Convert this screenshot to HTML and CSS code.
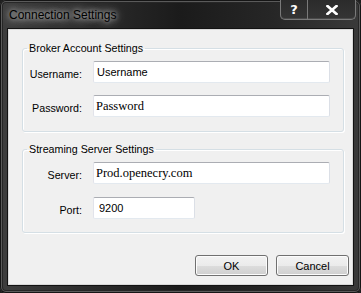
FILE: index.html
```html
<!DOCTYPE html>
<html>
<head>
	<title>Connection Settings</title>
	<link rel="stylesheet" href="styles.css">
</head>
<body>
	<div class="window">
		<div class="titlebar">
			<span class="title">Connection Settings</span>
			<div class="caption-buttons">
				<div class="cap-btn help">?</div>
				<div class="cap-btn close">
					<svg width="12" height="10" viewBox="0 0 12 10">
						<path d="M1.5 1 L10.5 9 M10.5 1 L1.5 9" stroke="#fff" stroke-width="2.6" stroke-linecap="square"/>
					</svg>
				</div>
			</div>
		</div>

		<div class="client">
			<fieldset class="group group-broker">
				<legend>Broker Account Settings</legend>
				<div class="form-grid">
					<label>Username:</label>
					<input class="field" type="text" value="Username">
					<label>Password:</label>
					<input class="field serif" type="text" value="Password">
				</div>
			</fieldset>

			<fieldset class="group group-server">
				<legend>Streaming Server Settings</legend>
				<div class="form-grid">
					<label>Server:</label>
					<input class="field serif" type="text" value="Prod.openecry.com">
					<label>Port:</label>
					<input class="field short" type="text" value="9200">
				</div>
			</fieldset>

			<div class="actions">
				<button class="btn">OK</button>
				<button class="btn">Cancel</button>
			</div>
		</div>
	</div>
</body>
</html>
```

FILE: styles.css
```css
* {
	margin: 0;
	padding: 0;
	box-sizing: border-box;
}
body {
	background-color: #1f1f1f;
	font-family: 'Liberation Sans', Arial, sans-serif;
	font-size: 11px;
	width: 361px;
	height: 293px;
	overflow: hidden;
}
.window {
	width: 361px;
	height: 293px;
	display: flex;
	flex-direction: column;
	border-radius: 6px;
	background: linear-gradient(to right, #3e3e3e 0%, #2c2c2c 25%, #1b1b1b 50%, #262626 75%, #3a3a3a 100%);
	box-shadow: inset 0 0 0 1px #151515, inset 0 0 0 2px #5a5a5a, inset 0 0 0 3px #262626;
}

/* title bar */
.titlebar {
	height: 29px;
	display: flex;
	align-items: flex-start;
	padding-left: 9px;
}
.title {
	margin-top: 7px;
	font-size: 12px;
	line-height: 16px;
	color: #000;
	text-shadow: 0 0 5px rgba(255, 255, 255, 0.7), 0 0 10px rgba(255, 255, 255, 0.6), 0 0 16px rgba(255, 255, 255, 0.45);
}
.caption-buttons {
	margin-left: auto;
	margin-right: 5px;
	display: flex;
	height: 20px;
	border: 1px solid #7a7a7a;
	border-top: none;
	border-radius: 0 0 5px 5px;
	background: linear-gradient(#2b2b2b, #353535);
	box-shadow: inset 0 -1px 0 #4a4a4a;
}
.cap-btn {
	display: flex;
	align-items: center;
	justify-content: center;
	color: #fff;
}
.help {
	width: 27px;
	border-right: 1px solid #7a7a7a;
	font-family: 'DejaVu Sans', sans-serif;
	font-weight: bold;
	font-size: 13px;
	padding-bottom: 1px;
}
.close {
	width: 47px;
}

/* client area */
.client {
	flex: 1;
	margin: 0 8px 8px 8px;
	background-color: #f0f0f0;
	border: 1px solid #d8d8d8;
	box-shadow: 0 0 0 1px #121212;
	padding-top: 11px;
	display: flex;
	flex-direction: column;
}
.group {
	margin: 0 8px 0 13px;
	border: 1px solid #d5dfe5;
	border-radius: 3px;
	box-shadow: 1px 1px 0 #fff, inset 1px 1px 0 #fff;
	padding: 6px 4px 14px 4px;
}
.group-server {
	margin-top: 10px;
	padding-bottom: 13px;
}
.group legend {
	padding: 0 2px;
	font-size: 10.7px;
	line-height: 14px;
	color: #000;
}
.form-grid {
	display: grid;
	grid-template-columns: 55px 237px;
	column-gap: 11px;
	row-gap: 12px;
	align-items: center;
}
.group-server .form-grid {
	row-gap: 13px;
}
.form-grid label {
	text-align: right;
	padding-top: 3px;
	font-size: 10.7px;
	color: #000;
}
.field {
	height: 22px;
	width: 237px;
	border: 1px solid #e2e3ea;
	border-top-color: #abadb3;
	border-right-color: #dbdfe6;
	border-bottom-color: #e3e9ef;
	border-radius: 2px;
	background-color: #fff;
	padding: 0 3px;
	font-family: 'Liberation Sans', Arial, sans-serif;
	font-size: 11px;
	color: #000;
	outline: none;
}
.field.serif {
	font-family: 'Liberation Serif', 'Times New Roman', serif;
	font-size: 12.5px;
	padding-left: 2px;
}
.field.short {
	width: 102px;
	padding-left: 5px;
}

/* buttons */
.actions {
	margin-top: 22px;
	display: flex;
	justify-content: flex-end;
	gap: 8px;
	padding-right: 3px;
}
.btn {
	width: 73px;
	height: 21px;
	border: 1px solid #707070;
	border-radius: 3px;
	background: linear-gradient(#f2f2f2 0%, #ebebeb 50%, #dddddd 51%, #cfcfcf 100%);
	box-shadow: inset 0 0 0 1px #fcfcfc;
	font-family: 'Liberation Sans', Arial, sans-serif;
	font-size: 11px;
	color: #000;
}
```
